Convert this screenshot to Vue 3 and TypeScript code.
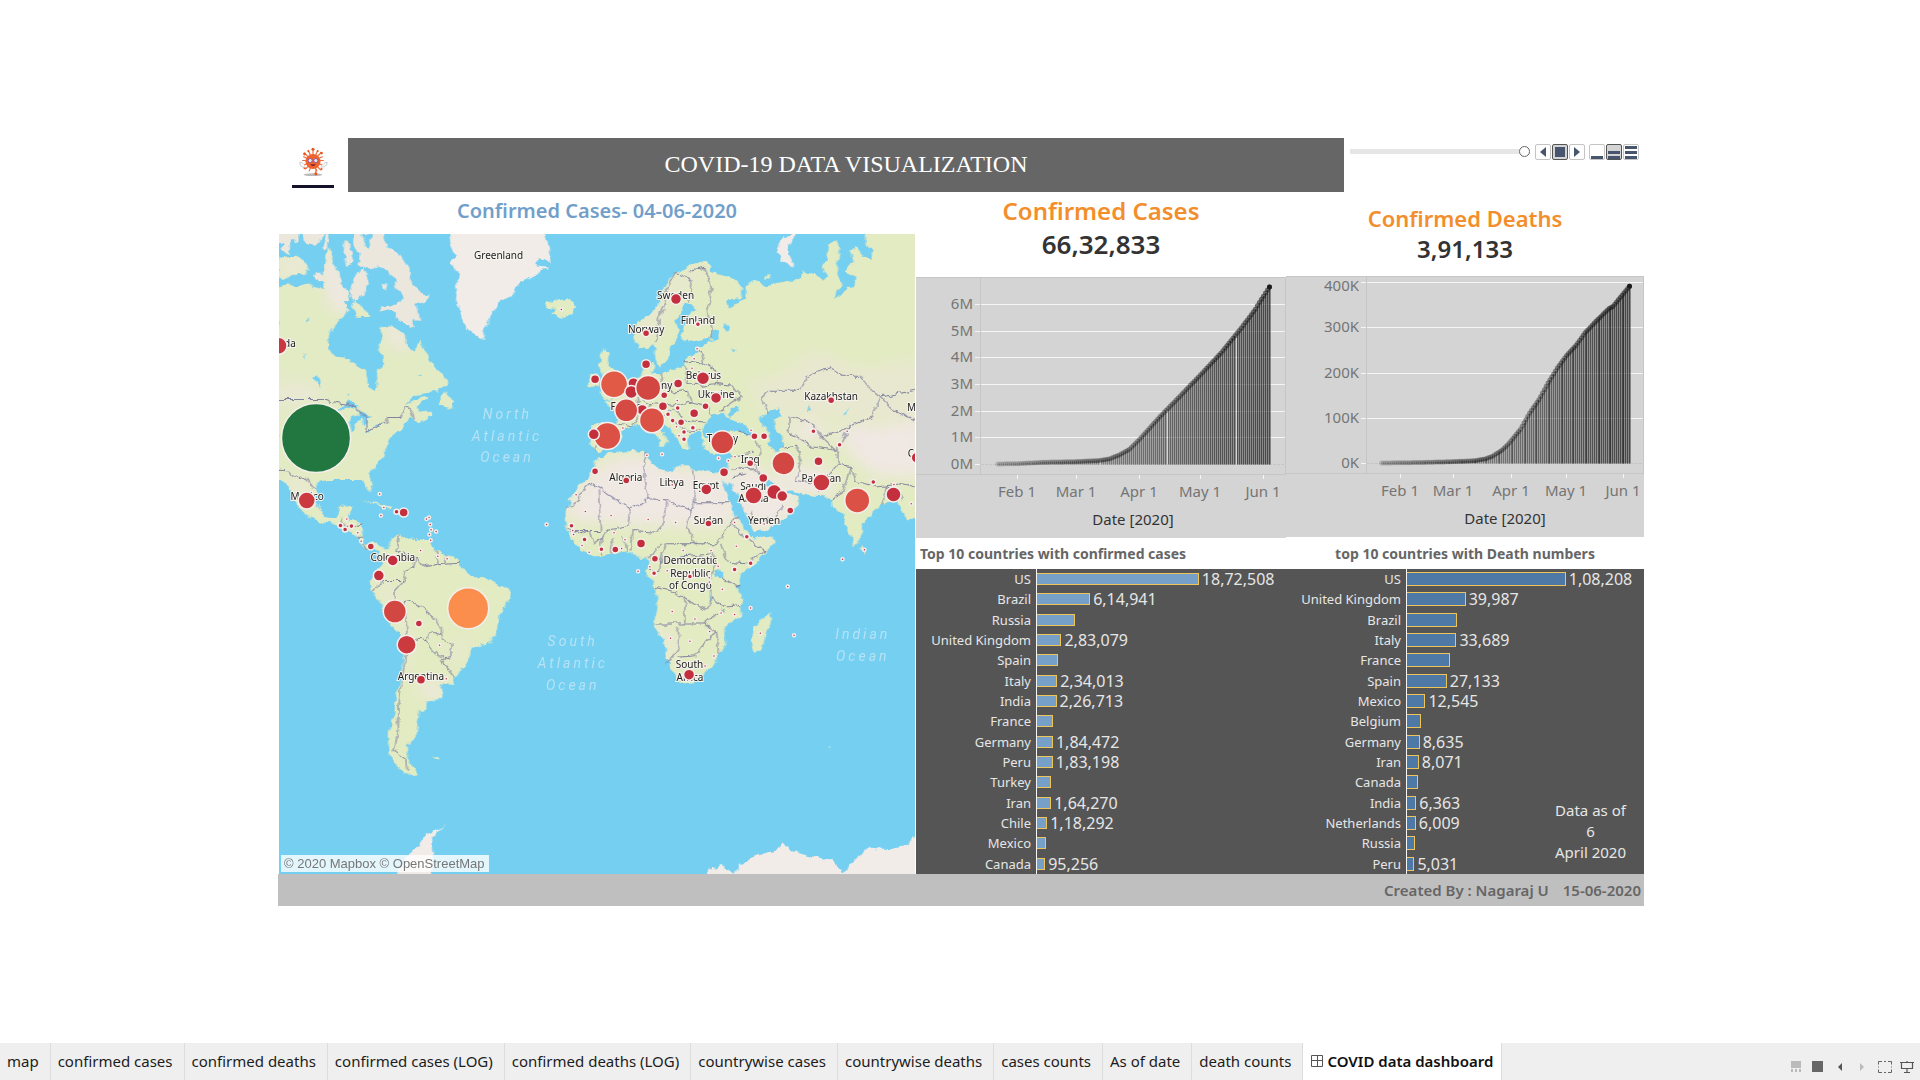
<script setup lang="ts">
interface Bar { name: string; value: number; label?: string }
interface Tick { at: number; text: string }
type Bubble = [x: number, y: number, r: number, fill?: string]
type Label = [x: number, y: number, text: string]

const mapX = (x: number) => (x - 21) / 2.376
const mapY = (y: number) => (y - 312) / 3

const RED = '#c32f3d'
const CORAL = '#d24741'

const bubbles: Bubble[] = [
  [110, 923, 34, '#21773f'], [471, 1433, 20, '#fb8e4d'],
  [817, 762, 13, '#e15a46'], [863, 759, 5], [858, 785, 6], [898, 773, 12, CORAL],
  [884, 839, 5], [846, 840, 11, '#d54a43'], [907, 870, 12, '#dc5145'],
  [801, 917, 13, '#dc5145'], [769, 912, 5], [1074, 936, 11, CORAL], [1219, 999, 11, CORAL],
  [1394, 1110, 12, '#dc5145'], [1309, 1056, 8, '#c9373f'], [1480, 1092, 7],
  [1148, 1095, 8, '#c9373f'], [1197, 1085, 7], [1216, 1097, 5], [1171, 1043, 4],
  [1235, 1140, 3], [297, 1443, 11, '#d24741'], [325, 1542, 9, '#cb3a3f'], [259, 1335, 5],
  [292, 1290, 5], [354, 1479, 3], [359, 1647, 4], [995, 1632, 5], [21, 647, 8, '#c9373f'],
  [88, 1110, 8, '#cb3a3f'], [964, 507, 5], [893, 609, 3], [1016, 582, 2], [893, 702, 4],
  [772, 747, 4], [969, 760, 4], [1028, 744, 6], [1059, 803, 5], [1007, 849, 4],
  [933, 828, 4], [936, 795, 3], [1034, 828, 3], [976, 876, 3], [1004, 892, 2], [1332, 810, 3],
  [1302, 993, 4], [1535, 982, 5], [1150, 918, 3], [1173, 918, 3], [1140, 999, 3],
  [1078, 1026, 4], [1036, 1077, 5], [846, 1050, 3], [772, 1023, 3], [1041, 1179, 3],
  [881, 1239, 4], [820, 1257, 3], [787, 1256, 2], [747, 1227, 2], [716, 1186, 2],
  [914, 1285, 3], [912, 1328, 2], [997, 1338, 2], [1103, 1317, 2], [1141, 1298, 2],
  [1132, 1219, 2], [318, 1146, 4], [301, 1144, 2], [168, 1185, 2], [194, 1187, 2],
  [179, 1197, 2], [240, 1248, 3], [1432, 1055, 2], [1352, 943, 2], [1290, 903, 2],
  [983, 905, 2], [983, 927, 2], [968, 833, 2], [956, 871, 2], [945, 852, 2],
  [692, 538, 1], [1014, 656, 1], [1007, 686, 1], [1002, 714, 1], [967, 811, 1],
  [965, 889, 1], [971, 916, 1], [838, 893, 1], [895, 975, 1], [931, 972, 1], [1065, 984, 1],
  [1088, 991, 1], [1104, 979, 1], [1142, 900, 1], [1370, 903, 1], [1481, 1062, 1],
  [1522, 1120, 1], [727, 1093, 1], [749, 1143, 1], [810, 1155, 1], [898, 1167, 1],
  [963, 1176, 1], [1103, 1176, 1], [1107, 1247, 1], [1047, 1260, 1], [981, 1260, 1],
  [817, 1207, 1], [843, 1228, 1], [835, 1254, 1], [758, 1265, 1], [741, 1245, 1],
  [721, 1212, 1], [719, 1200, 1], [657, 1182, 1], [874, 1322, 1], [902, 1309, 1],
  [943, 1321, 1], [1043, 1342, 1], [1043, 1354, 1], [1064, 1307, 1], [1074, 1376, 1],
  [955, 1443, 1], [1009, 1465, 1], [1071, 1447, 1], [1103, 1452, 1], [1044, 1503, 1],
  [951, 1523, 1], [997, 1532, 1], [1054, 1576, 1], [1033, 1606, 1], [1164, 1508, 1],
  [1141, 1432, 1], [1229, 1368, 1], [1244, 1514, 1], [1359, 1286, 1], [1411, 1258, 1],
  [1173, 1181, 1], [955, 1063, 1], [261, 1091, 1], [271, 1131, 1], [264, 1155, 1],
  [183, 1166, 1], [209, 1207, 1], [217, 1232, 1], [358, 1260, 1], [399, 1277, 1],
  [421, 1285, 1], [403, 1544, 1], [419, 1644, 1], [378, 1161, 1], [372, 1166, 1],
  [381, 1182, 1], [383, 1198, 1], [395, 1203, 1], [379, 1212, 1], [382, 1229, 1],
]

const countryLabels: Label[] = [
  [543, 387, 'Greenland'], [963, 507, 'Sweden'], [1016, 582, 'Finland'], [893, 609, 'Norway'],
  [1029, 745, 'Belarus'], [1059, 804, 'Ukraine'], [1332, 810, 'Kazakhstan'], [904, 776, 'Germany'],
  [846, 840, 'France'], [1074, 934, 'Turkey'], [1140, 999, 'Iraq'], [845, 1051, 'Algeria'],
  [954, 1066, 'Libya'], [1035, 1077, 'Egypt'], [1147, 1078, 'Saudi'], [1148, 1114, 'Arabia'],
  [1309, 1056, 'Pakistan'], [89, 1109, 'Mexico'], [1041, 1180, 'Sudan'], [1173, 1181, 'Yemen'],
  [998, 1300, 'Democratic'], [998, 1338, 'Republic'], [998, 1376, 'of Congo'], [292, 1290, 'Colombia'],
  [359, 1647, 'Argentina'], [996, 1612, 'South'], [997, 1650, 'Africa'], [48, 649, 'da'],
  [1523, 842, 'M'], [1521, 981, 'C'],
]

const oceanLabels: Label[] = [
  [564, 866, 'North'], [563, 931, 'Atlantic'], [563, 996, 'Ocean'],
  [719, 1547, 'South'], [719, 1613, 'Atlantic'], [719, 1678, 'Ocean'],
  [1407, 1526, 'Indian'], [1407, 1591, 'Ocean'],
]

// Northern Canada is traced on its own, finer grid
const northLand: string[] = [
  'M0 165 20 155 60 160 75 155 95 150 105 160 140 168 142 145 128 140 138 112 145 60 156 40 168 90 180 120 195 160 212 172 216 205 200 215 215 235 190 255 155 300 150 340 170 370 215 375 235 400 262 410 268 450 290 468 300 460 298 412 320 395 318 370 300 350 310 320 305 280 350 285 380 300 385 340 405 353 420 340 428 318 450 370 465 400 505 435 505 455 480 475 410 485 385 512 430 490 452 496 420 520 425 538 465 532 465 545 420 568 400 550 370 590 345 605 325 640 320 670 275 715 273 740 0 740Z',
  'M505 470 480 515 525 526 530 505 508 488Z',
  'M0 75 60 65 90 100 85 125 40 125 20 138 0 132Z',
  'M232 205 250 215 280 250 262 252 235 250 225 225Z',
]
const northDry: string[] = [
  'M200 0 232 0 228 40 250 62 240 92 262 108 300 100 330 110 350 140 355 168 380 190 372 202 345 216 310 222 310 235 340 235 370 260 410 287 400 262 428 262 415 206 440 215 455 185 430 178 392 140 400 120 390 95 360 60 325 40 318 0 292 0 275 20 278 45 262 40 250 6 272 0Z',
  'M0 0 60 0 60 30 42 20 32 62 12 55 20 30 0 34ZM75 0 138 0 125 30 108 42 82 20ZM142 0 152 0 152 42 138 50ZM108 122 138 122 128 146Z',
  'M200 20 216 30 228 90 205 95 198 60ZM262 108 274 150 250 192 228 205 218 180 232 125ZM315 150 330 152 325 175 314 168Z',
]
const northWater: string[] = [
  'M180 530 215 503 245 520 240 530 210 520 190 535ZM215 600 220 550 240 540 255 550 236 570 228 592ZM245 528 270 545 288 550 262 560 270 570 256 576ZM255 597 290 580 275 594ZM290 577 322 565 302 577Z',
  'M103 436 120 428 132 460 112 446ZM84 268 96 255 91 272ZM79 372 86 360 83 380ZM2 262 10 270 2 282ZM420 425 436 420 430 430ZM204 488 214 484 212 494ZM196 205 212 210 206 218Z',
]
const northBorder =
  'M0 499H148L155 503 205 512 240 525 265 555 265 590 325 570 330 553 370 553 385 520 397 525 407 555'

const water: string[] = [
  // Mediterranean, Black Sea, Caspian
  'M760 972 785 962 832 935 838 900 870 885 890 882 905 905 930 925 920 945 938 950 948 935 938 915 918 895 903 868 925 868 955 900 966 925 980 950 995 958 990 930 1000 908 1018 905 1028 930 1030 955 1060 972 1090 962 1095 975 1088 1010 1080 1030 1050 1025 1005 1018 995 1005 970 1005 955 1025 925 1015 905 1000 890 965 860 962 815 965 790 980 760 982Z',
  'M1025 905 1035 880 1052 850 1075 845 1080 860 1100 868 1125 880 1146 905 1140 916 1100 903 1060 916 1030 918ZM1086 850 1092 838 1114 828 1104 850 1092 858Z',
  'M1163 865 1185 840 1210 835 1217 855 1197 868 1200 900 1215 915 1219 950 1203 967 1185 948 1187 910 1168 885Z',
  // Red Sea and Persian Gulf
  'M1075 1048 1086 1066 1092 1052 1118 1120 1140 1180 1150 1218 1136 1214 1108 1160 1090 1110Z',
  'M1167 1036 1185 1050 1215 1082 1242 1080 1246 1096 1232 1090 1222 1108 1190 1092 1168 1054Z',
  'M1280 822 1284 840 1276 842ZM1360 855 1374 834 1370 848ZM1045 612 1062 602 1066 622 1052 630ZM1078 575 1092 590 1086 604 1074 590ZM1095 655 1108 660 1100 668Z',
  'M1055 1345 1058 1318 1074 1322 1076 1342ZM1038 1375 1050 1410 1046 1412ZM1072 1425 1078 1450 1074 1456Z',
]

const land: string[] = [
  // Southern North America
  'M21 1030 237 1020 236 1035 245 1075 238 1086 225 1060 218 1035 180 1030 150 1048 112 1055 106 1110 130 1160 158 1165 170 1130 195 1126 186 1165 216 1178 220 1210 225 1238 255 1240 275 1250 262 1262 228 1250 205 1220 185 1200 150 1180 125 1176 95 1160 65 1130 60 1105 40 1060 21 1045Z',
  // South America
  'M262 1250 278 1258 290 1225 305 1213 318 1225 380 1232 395 1260 415 1275 445 1285 455 1315 495 1345 530 1350 570 1378 572 1400 545 1450 542 1500 525 1535 480 1550 470 1590 450 1620 440 1645 435 1663 405 1658 412 1685 405 1708 372 1712 372 1735 355 1738 350 1790 345 1820 325 1850 330 1885 350 1930 325 1935 300 1910 285 1870 280 1810 295 1760 300 1690 312 1640 318 1580 310 1510 285 1480 270 1430 243 1385 240 1360 250 1330 268 1300Z',
  // Eurasia and Africa
  'M1540 306 1412 306 1412 345 1432 362 1430 390 1410 380 1392 350 1380 362 1385 400 1366 425 1392 440 1390 465 1370 468 1352 503 1335 500 1358 460 1345 425 1352 360 1345 330 1328 345 1322 385 1310 400 1325 440 1312 455 1290 430 1265 420 1255 450 1215 455 1180 468 1150 455 1130 470 1128 505 1090 535 1082 512 1090 506 1118 505 1124 480 1105 447 1065 433 1045 425 1048 405 1035 395 1000 402 965 430 940 460 930 500 915 540 870 580 865 620 875 660 905 650 912 640 915 680 925 712 945 690 950 650 970 620 965 575 980 535 985 515 1005 520 1008 540 985 570 978 610 985 630 1000 635 1045 622 1050 635 1010 652 1014 670 990 680 985 705 930 728 908 728 898 690 886 695 885 735 870 745 855 770 825 805 797 815 820 840 825 880 765 882 760 945 785 965 775 985 765 1030 735 1060 715 1100 705 1140 702 1190 715 1225 735 1250 768 1280 800 1272 850 1262 870 1280 895 1285 900 1310 893 1330 915 1370 918 1420 912 1485 935 1530 940 1580 962 1640 970 1660 1010 1655 1050 1610 1065 1570 1083 1545 1080 1490 1118 1455 1120 1410 1110 1370 1120 1330 1150 1300 1195 1240 1192 1218 1150 1225 1142 1206 1170 1200 1225 1165 1255 1120 1255 1105 1240 1085 1290 1098 1335 1102 1335 1130 1360 1150 1368 1190 1388 1247 1405 1220 1405 1180 1455 1120 1490 1110 1500 1140 1515 1170 1540 1165Z',
  // Islands
  'M655 517 690 510 715 507 727 530 715 550 690 565 670 552 680 540 660 530Z',
  'M783 700 790 660 805 665 800 690 812 720 848 765 835 800 795 812 785 790 800 760 790 735ZM758 735 778 725 782 765 758 772Z',
  'M905 700 915 705 912 720 903 715ZM1180 435 1188 432 1186 445 1178 445ZM865 898 872 900 872 940 864 935Z',
  'M1187 1442 1190 1470 1165 1560 1148 1566 1142 1535 1150 1490ZM1406 1242 1416 1258 1410 1270 1404 1258Z',
  'M215 1108 255 1118 292 1130 285 1134 255 1122 225 1112ZM296 1140 328 1146 322 1152 296 1150ZM388 1880 404 1878 400 1884 388 1884ZM1325 1842 1336 1846 1328 1848Z',
]

const dryLand: string[] = [
  'M425 306 430 350 440 380 428 400 450 430 440 470 445 510 455 560 470 600 505 633 515 580 530 550 545 510 580 490 590 460 640 430 660 410 625 405 640 380 665 398 668 360 655 306Z',
  'M1245 306 1212 330 1203 370 1225 400 1245 410 1232 375 1230 345 1255 306Z',
  'M1038 2240 1040 2215 1070 2203 1100 2228 1117 2200 1150 2175 1195 2160 1215 2137 1240 2160 1290 2178 1330 2185 1362 2228 1395 2180 1420 2150 1470 2155 1510 2145 1525 2120 1540 2120 1540 2240Z',
  'M300 2240 330 2170 350 2150 370 2110 410 2088 420 2078 400 2104 385 2120 388 2160 382 2240Z',
]

const arid: string[] = [
  'M775 1010 840 975 892 975 930 1010 1000 1015 1080 1030 1090 1100 1112 1165 1060 1190 900 1185 700 1170 715 1100Z',
  'M1085 1030 1165 1000 1190 1060 1255 1110 1230 1170 1145 1210 1110 1130Z',
  'M1340 900 1400 880 1440 890 1560 870 1560 1040 1440 1040 1380 980Z',
  'M1230 880 1300 870 1330 910 1260 940ZM1180 1040 1290 1000 1340 1030 1330 1095 1240 1085ZM1150 1225 1195 1215 1180 1250Z',
  'M40 1040 90 1060 90 1100 60 1090Z',
  'M310 1500 328 1500 322 1620 316 1620ZM350 1655 410 1655 410 1705 375 1705ZM915 1490 940 1490 960 1600 940 1590Z',
]

const steppe: string[] = [
  'M870 580 960 440 1050 400 1040 430 960 500 900 640Z',
  'M1130 760 1200 740 1300 660 1400 720 1560 680 1560 880 1340 860 1180 850Z',
  'M250 1350 290 1350 330 1500 300 1480ZM420 1560 470 1500 450 1620Z',
]

const borders: string[] = [
  'M21 1020 45 1022 62 1045 85 1040 108 1080',
  'M965 430 1000 450 995 515M965 430 945 470 925 560 918 640M1000 420 1030 412 1048 480 1040 540 1050 600 1045 620',
  'M1010 660 1025 670 1030 700 1060 720 1058 760 1100 765 1118 800 1070 840M985 690 1030 700M985 705 990 760 1030 765 1058 760M930 728 928 765 960 785 990 780 1000 815 1035 825 1050 855M870 745 870 800 900 820 960 825 1000 815M825 880 860 890 880 840 870 800M900 820 895 865 925 860 960 835 985 870 1035 875M960 870 985 900 1020 900M780 885 775 960',
  'M1180 850 1165 805 1185 780 1262 780 1270 740 1330 712 1360 735 1400 735 1430 780 1450 800 1430 860 1370 890 1310 920 1290 880 1232 858 1232 905M1450 800 1533 780M1450 800 1480 840 1533 870M1310 920 1345 960 1370 900M1232 905 1290 950 1345 960 1350 1000 1320 1040 1300 1085M1218 950 1250 945 1260 1000 1250 1050 1295 1060M1350 1000 1380 1010 1390 1050 1440 1070 1500 1060 1533 1070M1380 1010 1360 1080 1335 1105M1110 905 1150 915 1165 960 1150 1000 1165 1040M1095 975 1150 965M1095 1020 1140 1010 1170 1045M1145 1140 1145 1180 1200 1160 1220 1120M1100 1040 1130 1030M1455 1120 1460 1070 1490 1075 1500 1110',
  'M762 1058 735 1090 735 1110 705 1128M762 1058 855 1135 900 1105 885 1010 895 965M900 1105 940 1108 1000 1140 1008 1130 1006 1020M1006 1117H1090M780 1080 785 1200 710 1200M855 1135 850 1185 800 1200 790 1220M940 1108 935 1180 920 1205 860 1200 855 1260M1000 1140 990 1190 1010 1240 940 1240 925 1300M1010 1240 1060 1240 1095 1180 1110 1160M1095 1180 1130 1220 1175 1260 1130 1300 1085 1295 1070 1240M930 1240 900 1290M915 1370 950 1380 985 1400 985 1480H915M925 1300 970 1280 1050 1270 1060 1300 1040 1360 1050 1400 1035 1440 985 1400M985 1480 1030 1480 1060 1450 1080 1440M970 1490V1560L940 1600M970 1580 1010 1575 1060 1500 1030 1480M1060 1500 1065 1570M1075 1340 1115 1370M1050 1400 1080 1430 1118 1425M740 1210 760 1200 770 1240 790 1220 785 1270M810 1220 812 1268M840 1220 848 1262M705 1190 740 1210M900 1320 925 1320 930 1280',
  'M305 1215 300 1260 345 1280 340 1310 320 1320 320 1350 295 1385 300 1420 340 1410 390 1460 405 1490 405 1515 430 1540 430 1575 408 1590 440 1640M345 1280 365 1310 400 1300 395 1260M400 1300 450 1295M420 1300 415 1275M243 1385 270 1350 320 1350M300 1420 325 1450 328 1500 320 1600 308 1700 305 1800 295 1860 325 1885 328 1920M328 1520 370 1530 385 1500 405 1515M370 1530 405 1580 430 1575M168 1165 180 1195 220 1180M205 1220 222 1220M225 1238 235 1255',
]

const casesAnchors: [number, number][] = [
  [0, 0.001], [10, 0.012], [23, 0.067], [38, 0.086], [50, 0.13], [55, 0.19], [60, 0.34],
  [65, 0.55], [70, 0.93], [80, 1.77], [90, 2.55], [100, 3.34], [110, 4.15], [120, 5.08], [127, 5.8], [130, 6.17], [134, 6.63],
]
const deathsAnchors: [number, number][] = [
  [0, 0], [20, 1], [38, 2.9], [50, 5], [56, 9], [60, 15], [65, 28], [69, 44], [75, 74], [80, 110], [85, 140],
  [90, 177], [95, 210], [100, 238], [105, 260], [110, 288], [116, 314], [123, 342], [125, 346], [130, 371], [134, 391],
]

function daily(anchors: [number, number][]): number[] {
  const out: number[] = []
  for (let s = 0; s < anchors.length - 1; s++) {
    const [d0, v0] = anchors[s]
    const [d1, v1] = anchors[s + 1]
    for (let d = d0; d < d1; d++) out.push(v0 + ((v1 - v0) * (d - d0)) / (d1 - d0))
  }
  out.push(anchors[anchors.length - 1][1])
  return out
}

function chart(id: string, width: number, left: number, x0: number, x1: number, unit: number, anchors: [number, number][], ticks: Tick[]) {
  const step = (x1 - x0) / 134
  const points = daily(anchors).map((v, i) => ({
    x: x0 + i * step,
    y: 187 - v * unit,
    o: 0.15 + (0.45 * i) / 134,
  }))
  const months = [
    { at: 10, text: 'Feb 1' }, { at: 39, text: 'Mar 1' }, { at: 70, text: 'Apr 1' },
    { at: 100, text: 'May 1' }, { at: 131, text: 'Jun 1' },
  ].map(m => ({ x: Math.round(x0 + m.at * step), text: m.text }))
  return { id, width, left, points, months, ticks: ticks.map(t => ({ y: Math.round(187 - t.at * unit), text: t.text })) }
}

const casesChart = chart('cases', 370, 64, 81, 353, 26.7, casesAnchors,
  [0, 1, 2, 3, 4, 5, 6].map(n => ({ at: n, text: `${n}M` })))
const deathsChart = chart('deaths', 358, 80, 95, 343, 0.452, deathsAnchors,
  [0, 100, 200, 300, 400].map(n => ({ at: n, text: `${n}K` })))

const panels = [
  { ...casesChart, title: 'Confirmed Cases', total: '66,32,833' },
  { ...deathsChart, title: 'Confirmed Deaths', total: '3,91,133' },
]

const caseBars: Bar[] = [
  { name: 'US', value: 1872508, label: '18,72,508' }, { name: 'Brazil', value: 614941, label: '6,14,941' },
  { name: 'Russia', value: 440538 }, { name: 'United Kingdom', value: 283079, label: '2,83,079' },
  { name: 'Spain', value: 240660 }, { name: 'Italy', value: 234013, label: '2,34,013' },
  { name: 'India', value: 226713, label: '2,26,713' }, { name: 'France', value: 189569 },
  { name: 'Germany', value: 184472, label: '1,84,472' }, { name: 'Peru', value: 183198, label: '1,83,198' },
  { name: 'Turkey', value: 167410 }, { name: 'Iran', value: 164270, label: '1,64,270' },
  { name: 'Chile', value: 118292, label: '1,18,292' }, { name: 'Mexico', value: 105680 },
  { name: 'Canada', value: 95256, label: '95,256' },
]
const deathBars: Bar[] = [
  { name: 'US', value: 108208, label: '1,08,208' }, { name: 'United Kingdom', value: 39987, label: '39,987' },
  { name: 'Brazil', value: 34021 }, { name: 'Italy', value: 33689, label: '33,689' },
  { name: 'France', value: 29068 }, { name: 'Spain', value: 27133, label: '27,133' },
  { name: 'Mexico', value: 12545, label: '12,545' }, { name: 'Belgium', value: 9548 },
  { name: 'Germany', value: 8635, label: '8,635' }, { name: 'Iran', value: 8071, label: '8,071' },
  { name: 'Canada', value: 7717 }, { name: 'India', value: 6363, label: '6,363' },
  { name: 'Netherlands', value: 6009, label: '6,009' }, { name: 'Russia', value: 5384 },
  { name: 'Peru', value: 5031, label: '5,031' },
]
const rankings = [
  { id: 'cases', title: 'Top 10 countries with confirmed cases', bars: caseBars, share: 65 },
  { id: 'deaths', title: 'top 10 countries with Death numbers', bars: deathBars, share: 67 },
]

const tabs = [
  'map', 'confirmed cases', 'confirmed deaths', 'confirmed cases (LOG)', 'confirmed deaths (LOG)',
  'countrywise cases', 'countrywise deaths', 'cases counts', 'As of date', 'death counts',
]
</script>

<template>
  <div class="page">
    <main class="stage">
      <div class="dashboard">
        <header class="top">
          <div class="logo">
            <svg width="44" height="50" viewBox="0 0 44 50" aria-hidden="true">
              <ellipse cx="22" cy="39" rx="10" ry="1.5" fill="#b9b9b9" />
              <g stroke="#ee6a3a" stroke-width="1.2" stroke-linecap="round">
                <path d="M22 12V27M13 16 30 34M30 16 14 33M11 24H33M17 13l9 22M27 13l-9 22M12 20l20 9M32 20l-20 9M25 32v6" />
              </g>
              <g fill="#e9541f">
                <circle cx="22" cy="12" r="1.6" /><circle cx="13" cy="17" r="1.5" /><circle cx="31" cy="16" r="1.5" />
                <circle cx="17" cy="14" r="1" /><circle cx="27" cy="14" r="1" /><circle cx="25" cy="38" r="1.6" />
                <circle cx="13" cy="32" r="1.2" /><circle cx="31" cy="33" r="1.2" />
              </g>
              <circle cx="22" cy="25" r="8" fill="#f0622c" />
              <g fill="#e8e4f4" stroke="#8a5a9c">
                <circle cx="19" cy="24" r="2.200" /><circle cx="25" cy="24" r="2.200" />
              </g>
              <path d="M19 28q3 4 6 0z" fill="#8a2330" />
              <g fill="#fff" stroke="#b4b4c0" stroke-width="0.8">
                <path d="M14 31q-6 1-6-5q2-1 4 2M30 31q7 0 7-5q-2-1-4 2" />
              </g>
            </svg>
            <span class="logo-bar"></span>
          </div>
          <h1>COVID-19 DATA VISUALIZATION</h1>
          <div class="player">
            <input type="range" min="0" max="100" value="100" aria-label="Date" />
            <button type="button" aria-label="Previous"><svg viewBox="0 0 14 14"><path d="M10 2v10L4 7z" /></svg></button>
            <button type="button" class="on" aria-label="Stop"><svg viewBox="0 0 14 14"><path d="M2 2h10v10H2z" /></svg></button>
            <button type="button" class="last" aria-label="Next"><svg viewBox="0 0 14 14"><path d="M4 2v10l6-5z" /></svg></button>
            <button type="button" aria-label="Slow"><svg viewBox="0 0 14 14"><path d="M1 11h12v3H1z" /></svg></button>
            <button type="button" class="on" aria-label="Normal"><svg viewBox="0 0 14 14"><path d="M1 6h12v3H1zM1 11h12v3H1z" /></svg></button>
            <button type="button" aria-label="Fast"><svg viewBox="0 0 14 14"><path d="M1 1h12v3H1zM1 6h12v3H1zM1 11h12v3H1z" /></svg></button>
          </div>
        </header>

        <div class="body">
          <section class="map-col">
            <h2>Confirmed Cases- 04-06-2020</h2>
            <div class="map">
              <svg class="map-art" viewBox="0 0 636 639" preserveAspectRatio="xMidYMid slice" role="img" aria-label="World map of confirmed cases">
                <defs>
                  <filter id="coast" x="0" y="0" width="1" height="1">
                    <feTurbulence type="fractalNoise" baseFrequency="0.12" numOctaves="3" seed="4" result="n" />
                    <feDisplacementMap in="SourceGraphic" in2="n" scale="7" xChannelSelector="R" yChannelSelector="G" />
                  </filter>
                  <filter id="soft" x="-0.2" y="-0.2" width="1.4" height="1.4"><feGaussianBlur stdDeviation="20" /></filter>
                  <clipPath id="landmass"><path v-for="(d, i) in land" :key="i" :d="d" /></clipPath>
                  <clipPath id="north"><path v-for="(d, i) in northLand" :key="i" :d="d" /></clipPath>
                </defs>
                <rect width="636" height="639" fill="#75cff1" />
                <g filter="url(#coast)">
                  <rect x="-10" y="-10" width="656" height="659" fill="#75cff1" />
                  <g transform="translate(-1 -1) scale(0.33333)">
                    <path v-for="(d, i) in northLand" :key="i" :d="d" fill="#e3ebc4" />
                    <g clip-path="url(#north)">
                      <g filter="url(#soft)" fill="#eee7e0">
                        <path d="M130 40 240 150 220 240 170 240 130 150ZM310 270 380 290 400 350 340 340Z" />
                        <path d="M0 60 100 60 90 130 0 140ZM0 440 110 450 150 500 0 520Z" opacity="0.6" />
                      </g>
                    </g>
                    <path v-for="(d, i) in northDry" :key="i" :d="d" fill="#ece7dc" />
                    <path v-for="(d, i) in northWater" :key="i" :d="d" fill="#75cff1" />
                    <path class="border" :d="northBorder" />
                  </g>
                  <g transform="scale(0.42088 0.33333) translate(-21 -312)">
                    <path v-for="(d, i) in land" :key="i" :d="d" fill="#e3ebc2" />
                    <g clip-path="url(#landmass)">
                      <g filter="url(#soft)">
                        <path v-for="(d, i) in steppe" :key="i" :d="d" fill="#e8e8d0" />
                        <path v-for="(d, i) in arid" :key="i" :d="d" fill="#f0e8e3" />
                      </g>
                    </g>
                    <path v-for="(d, i) in dryLand" :key="i" :d="d" fill="#f1ece7" />
                    <path v-for="(d, i) in water" :key="i" :d="d" fill="#75cff1" />
                    <path v-for="(d, i) in borders" :key="i" class="border" :d="d" />
                  </g>
                </g>
                <g class="oceans">
                  <text v-for="(l, i) in oceanLabels" :key="i" :x="mapX(l[0])" :y="mapY(l[1])">{{ l[2] }}</text>
                </g>
                <g class="countries">
                  <text v-for="(l, i) in countryLabels" :key="i" :x="mapX(l[0])" :y="mapY(l[1])">{{ l[2] }}</text>
                </g>
                <g stroke="#f5efec" stroke-width="1.5">
                  <circle v-for="(b, i) in bubbles" :key="i" :cx="mapX(b[0])" :cy="mapY(b[1])" :r="b[2] + 0.5" :fill="b[3] ?? RED" />
                </g>
              </svg>
              <p class="credit">© 2020 Mapbox © OpenStreetMap</p>
            </div>
          </section>

          <section v-for="(p, n) in panels" :key="p.id" class="data-col" :class="p.id">
            <div class="kpi">
              <h2>{{ p.title }}</h2>
              <p>{{ p.total }}</p>
            </div>
            <svg class="chart" :viewBox="`0 0 ${p.width} 261`" role="img" :aria-label="p.title + ' by date'">
              <path class="frame" :d="`M0 .5H${p.width}M${p.left + 0.5} 0V197M0 197.5H${p.width}M${p.width - 0.5} 0V197`" />
              <path class="grid" :d="p.ticks.slice(1).map(t => `M${p.left + 1} ${t.y + 0.5}H${p.width - 1}`).join('')" />
              <path class="grid" :d="p.ticks.map(t => `M${p.left - 5} ${t.y + 0.5}H${p.left}`).join('')" />
              <path class="grid" :d="p.months.map(m => `M${m.x + 0.5} 198V202`).join('')" />
              <path class="zero" :d="`M${p.left + 1} 187.5H${p.width - 1}`" />
              <g fill="#1c1c1c">
                <rect v-for="(d, i) in p.points" :key="i" :x="Math.round(d.x)" :y="d.y" width="2" :height="187.5 - d.y" :opacity="d.o * 0.7" />
                <rect v-for="(d, i) in p.points" :key="i" :x="Math.round(d.x)" :y="d.y" width="1" :height="187.5 - d.y" :opacity="d.o" />
                <circle v-for="(d, i) in p.points" :key="i" :cx="d.x + 0.5" :cy="d.y" r="2.5" :opacity="d.o" />
                <circle :cx="p.points[134].x + 0.5" :cy="p.points[134].y" r="2.5" />
              </g>
              <g class="y-labels">
                <text v-for="t in p.ticks" :key="t.text" :x="p.left - 7" :y="Math.max(t.y + 5, 15)">{{ t.text }}</text>
              </g>
              <g class="x-labels">
                <text v-for="m in p.months" :key="m.text" :x="m.x" y="220">{{ m.text }}</text>
              </g>
              <text class="axis-title" :x="(p.left + p.width) / 2" y="248">Date [2020]</text>
            </svg>
            <h3>{{ rankings[n].title }}</h3>
            <div class="ranking">
              <div v-for="b in rankings[n].bars" :key="b.name" class="row">
                <span class="name">{{ b.name }}</span>
                <span class="track">
                  <span class="bar" :style="{ width: (b.value / rankings[n].bars[0].value) * rankings[n].share + '%' }"></span>
                  <span class="value">{{ b.label }}</span>
                </span>
              </div>
              <p v-if="p.id === 'deaths'" class="as-of">Data as of<br />6<br />April 2020</p>
            </div>
          </section>
        </div>

        <footer><span>Created By : Nagaraj U</span><span>15-06-2020</span></footer>
      </div>
    </main>

    <nav class="tabs">
      <button v-for="t in tabs" :key="t" type="button" class="tab">{{ t }}</button>
      <button type="button" class="tab active">
        <svg width="12" height="12" viewBox="0 0 12 12"><path d="M.5.5h11v11H.5zM.5 5.5h11M6.5.5v11" fill="none" stroke="#555" /></svg>
        COVID data dashboard
      </button>
      <div class="tools">
        <button type="button" aria-label="Filmstrip"><svg viewBox="0 0 12 12"><path d="M1 0h10v7H1zM1 8h2v3H1zM5 8h2v3H5zM9 8h2v3H9z" fill="#bbb" /></svg></button>
        <button type="button" aria-label="Sheet sorter"><svg viewBox="0 0 12 12"><path d="M0 0h11v11H0z" fill="#666" /></svg></button>
        <button type="button" aria-label="Previous sheet"><svg viewBox="0 0 12 12"><path d="M8 2v8L4 6z" fill="#555" /></svg></button>
        <button type="button" aria-label="Next sheet"><svg viewBox="0 0 12 12"><path d="M4 2v8l4-4z" fill="#bbb" /></svg></button>
        <button type="button" aria-label="Full screen"><svg viewBox="0 0 14 12"><path d="M.5 3.500V.5H4M10 .5h3.500v3M13.500 8.500v3H10M4 11.500H.5v-3M6 .5h2M6 11.500h2M.5 5.500v1M13.500 5.500v1" fill="none" stroke="#666" /></svg></button>
        <button type="button" aria-label="Presentation"><svg viewBox="0 0 14 12"><path d="M0 1.500h14M1.500 2v5.500h11V2M7 8v4M4 11.500h6M7 0v1" fill="none" stroke="#555" stroke-width="1.2" /></svg></button>
      </div>
    </nav>
  </div>
</template>

<style>
body {
  margin: 0;
  background: #fff;
}
</style>

<style scoped>
.page {
  display: flex;
  flex-direction: column;
  min-height: 100vh;
  font-family: 'Noto Sans', 'Open Sans', sans-serif;
  color: #333;
}
h1, h2, h3, p {
  margin: 0;
}
button {
  font: inherit;
  border: 0;
  padding: 0;
  background: none;
  color: inherit;
}
.stage {
  flex: 1;
  padding: 138px 0 40px 2px;
}
.dashboard {
  max-width: 1366px;
  margin: 0 auto;
}
.top {
  display: grid;
  grid-template-columns: 70fr 996fr 300fr;
  height: 54px;
}
.logo {
  display: flex;
  flex-direction: column;
  align-items: center;
}
.logo svg {
  height: 47px;
}
.logo-bar {
  width: 42px;
  height: 3px;
  background: #14122a;
}
h1 {
  background: #666;
  color: #fff;
  font: 400 24px/52px 'Liberation Serif', serif;
  text-align: center;
}
.player {
  display: flex;
  gap: 1px;
  align-items: flex-start;
  padding: 6px 5px 0 6px;
}
.player input {
  appearance: none;
  flex: 1;
  min-width: 0;
  height: 14px;
  margin: 0 4px 0 0;
  background: linear-gradient(#e6e6e6, #e6e6e6) 0 5px / 100% 5px no-repeat;
}
.player input::-webkit-slider-thumb {
  appearance: none;
  box-sizing: border-box;
  width: 11px;
  height: 11px;
  border: 1px solid #666;
  border-radius: 50%;
  background: #fff;
}
.player button {
  box-sizing: border-box;
  width: 16px;
  height: 16px;
  border: 1px solid #c4c4c4;
  border-radius: 2px;
}
.player button.on {
  border-color: #555;
  background: #d4d4d4;
}
.player button.last {
  margin-right: 3px;
}
.player svg {
  display: block;
  fill: #47566e;
}
.body {
  display: grid;
  grid-template-columns: 638fr 370fr 358fr;
}
.map-col,
.data-col {
  display: flex;
  flex-direction: column;
  min-width: 0;
}
.map-col h2 {
  color: #729fca;
  font-size: 20px;
  font-weight: 600;
  line-height: 38px;
  padding-bottom: 4px;
  text-align: center;
}
.map {
  position: relative;
  flex: 1;
  margin: 0 1px;
  background: #75cff1;
  overflow: hidden;
}
.map-art {
  display: block;
  width: 100%;
  height: 100%;
}
.border {
  fill: none;
  stroke: #8283a0;
  stroke-width: 1;
  vector-effect: non-scaling-stroke;
}
.countries text {
  font-size: 10px;
  fill: #222;
  stroke: #f6f4ee;
  stroke-width: 2px;
  paint-order: stroke;
  text-anchor: middle;
}
.oceans text {
  font: italic 14px Roboto, sans-serif;
  fill: #b5e2f5;
  letter-spacing: 3px;
  text-anchor: middle;
}
.credit {
  position: absolute;
  left: 2px;
  bottom: 2px;
  padding: 0 4px 0 3px;
  background: rgba(255, 255, 255, 0.8);
  color: #777;
  font: 13px/17px 'Liberation Sans', sans-serif;
}
.kpi {
  box-sizing: border-box;
  height: 85px;
  padding-top: 2px;
  text-align: center;
}
.kpi h2 {
  color: #f28e2b;
  font-size: 24px;
  font-weight: 600;
  line-height: 34px;
}
.kpi p {
  font-size: 26px;
  font-weight: 600;
  line-height: 32px;
}
.deaths .kpi {
  height: 84px;
  padding-top: 11px;
}
.deaths .kpi h2 {
  font-size: 22px;
  line-height: 31px;
}
.deaths .kpi p {
  font-size: 24px;
  line-height: 30px;
}
.chart {
  display: block;
  width: 100%;
  background: #d4d4d4;
}
.frame {
  fill: none;
  stroke: #c6c6c6;
}
.grid {
  stroke: #f5f5f5;
}
.zero {
  stroke: #c6c6c6;
  stroke-dasharray: 3 1;
}
.chart text {
  font-size: 15px;
  fill: #757575;
}
.y-labels text {
  text-anchor: end;
}
.x-labels text {
  text-anchor: middle;
}
.chart .axis-title {
  fill: #333;
  text-anchor: middle;
}
h3 {
  color: #666;
  font-size: 14px;
  font-weight: 700;
  line-height: 31px;
  padding-left: 4px;
}
.deaths h3 {
  padding: 1px 0 0;
  text-align: center;
}
.ranking {
  position: relative;
  display: grid;
  grid-template-rows: repeat(15, 1fr);
  height: 305px;
  background: #555;
  color: #e6e6e6;
}
.row {
  display: flex;
  min-height: 0;
  align-items: center;
}
.name {
  width: 115px;
  padding-right: 5px;
  font-size: 13px;
  line-height: 20px;
  text-align: right;
}
.track {
  display: flex;
  flex: 1;
  align-items: center;
  align-self: stretch;
  border-left: 1px solid #f5f5f5;
}
.bar {
  box-sizing: border-box;
  height: 12px;
  border: 1px solid #edc55c;
  border-left: 0;
  background: #76a0c7;
}
.deaths .bar {
  height: 14px;
  background: #4e79a7;
}
.value {
  padding-left: 3px;
  font-size: 16px;
  line-height: 20px;
}
.as-of {
  position: absolute;
  right: 18px;
  bottom: 11px;
  font-size: 15px;
  line-height: 21px;
  text-align: center;
}
footer {
  display: flex;
  gap: 14px;
  justify-content: flex-end;
  padding-right: 3px;
  background: #bfbfbf;
  color: #666;
  font-size: 15px;
  font-weight: 600;
  line-height: 32px;
}
.tabs {
  display: flex;
  height: 37px;
  background: #efefef;
  color: #1c1c1c;
  font-size: 15px;
}
.tab {
  padding: 0 11px 2px 7px;
  border-right: 1px solid #dcdcdc;
  white-space: nowrap;
}
.tab.active {
  display: flex;
  gap: 4px;
  align-items: center;
  padding: 0 8px 2px;
  background: #fff;
  color: #111;
  font-weight: 600;
}
.tools {
  display: flex;
  gap: 9px;
  align-items: center;
  margin-left: auto;
  padding: 11px 7px 0 0;
}
.tools button {
  width: 13px;
  height: 12px;
}
.tools svg {
  display: block;
  height: 12px;
}
</style>
